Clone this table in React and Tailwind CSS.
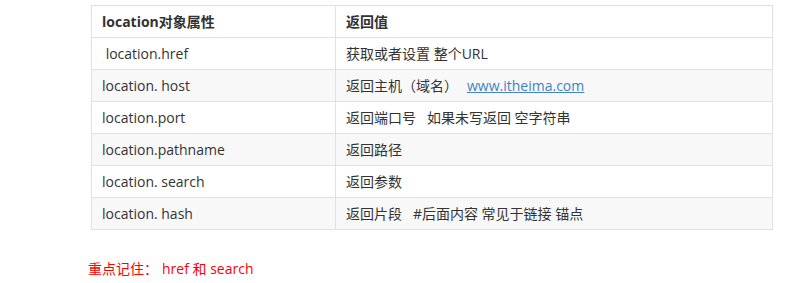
const rows = [
  { key: ' location.href', value: '获取或者设置 整个URL' },
  { key: 'location. host', value: '返回主机（域名）', link: 'www.itheima.com' },
  { key: 'location.port', value: '返回端口号   如果未写返回 空字符串' },
  { key: 'location.pathname', value: '返回路径' },
  { key: 'location. search', value: '返回参数' },
  { key: 'location. hash', value: '返回片段   #后面内容 常见于链接 锚点' },
];

export default function App() {
  return (
    <div
      className="w-[800px] h-[283px] bg-white text-[#333] overflow-hidden"
      style={{ fontFamily: '"Open Sans", "Noto Sans CJK SC", sans-serif' }}
    >
      <div className="pt-[5px] pl-[91px]">
        <table className="w-[682px] border-collapse text-[14px] leading-[20px]">
          <thead>
            <tr className="h-[32px] bg-white">
              <th className="w-[244px] border border-[#dfe2e5] px-[10px] text-left font-bold">
                location对象属性
              </th>
              <th className="border border-[#dfe2e5] px-[10px] text-left font-bold">返回值</th>
            </tr>
          </thead>
          <tbody>
            {rows.map((r, i) => (
              <tr key={i} className={i % 2 === 1 ? 'h-[32px] bg-[#f8f8f8]' : 'h-[32px] bg-white'}>
                <td className="border border-[#dfe2e5] px-[10px] whitespace-pre">{r.key}</td>
                <td className="border border-[#dfe2e5] px-[10px] whitespace-pre">
                  {r.value}
                  {r.link && (
                    <span className="ml-[9px] text-[#4183c4] underline">{r.link}</span>
                  )}
                </td>
              </tr>
            ))}
          </tbody>
        </table>
      </div>
      <div className="mt-[28px] pl-[88px] text-[14px] text-[#ff0000] whitespace-pre">
        重点记住：<span className="ml-[4px]">href 和 search</span>
      </div>
    </div>
  );
}
